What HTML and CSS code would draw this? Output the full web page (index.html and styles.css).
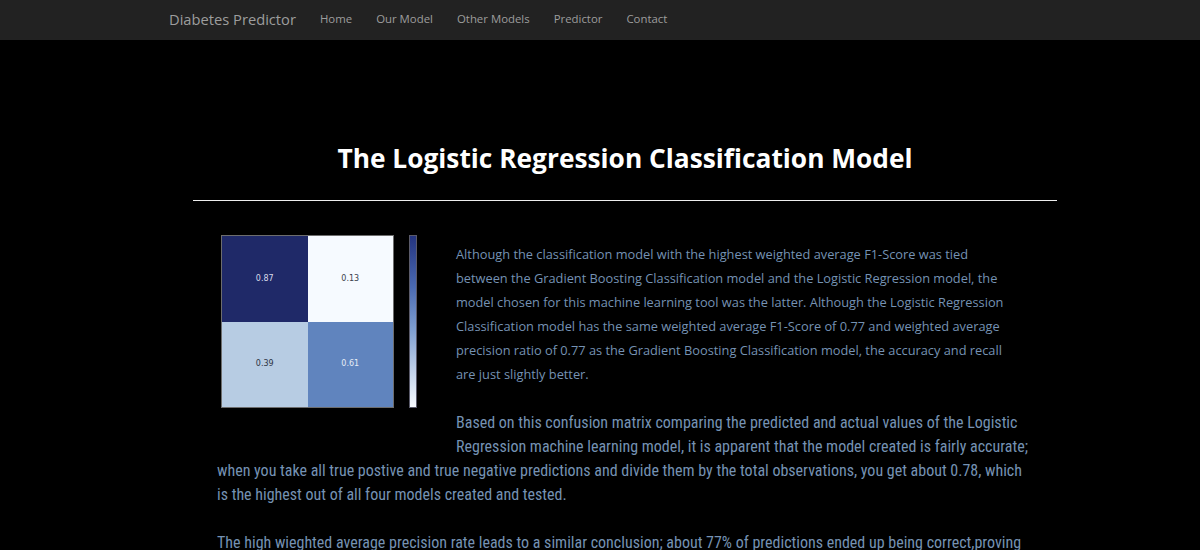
FILE: index.html
```html
<!DOCTYPE html>
<html lang="en">
<head>
<meta charset="utf-8">
<title>Diabetes Predictor</title>
<link rel="stylesheet" href="styles.css">
</head>
<body>
<nav class="navbar">
  <a class="brand" href="#">Diabetes Predictor</a>
  <ul class="nav">
    <li><a href="#">Home</a></li>
    <li><a href="#">Our Model</a></li>
    <li><a href="#">Other Models</a></li>
    <li><a href="#">Predictor</a></li>
    <li><a href="#">Contact</a></li>
  </ul>
</nav>
<main class="page">
  <div class="container">
    <h1 class="title">The Logistic Regression Classification Model</h1>
    <hr class="rule">
    <div class="content">
      <figure class="matrix-fig">
        <div class="matrix">
          <div class="cell c87">0.87</div>
          <div class="cell c13">0.13</div>
          <div class="cell c39">0.39</div>
          <div class="cell c61">0.61</div>
        </div>
        <div class="colorbar"></div>
      </figure>
      <p class="p1">Although the classification model with the highest weighted average F1-Score was tied<br>between the Gradient Boosting Classification model and the Logistic Regression model, the<br>model chosen for this machine learning tool was the latter. Although the Logistic Regression<br>Classification model has the same weighted average F1-Score of 0.77 and weighted average<br>precision ratio of 0.77 as the Gradient Boosting Classification model, the accuracy and recall<br>are just slightly better.</p>
      <p class="p2">Based on this confusion matrix comparing the predicted and actual values of the Logistic Regression machine learning model, it is apparent that the model created is fairly accurate; when you take all true postive and true negative predictions and divide them by the total observations, you get about 0.78, which is the highest out of all four models created and tested.</p>
      <p class="p2">The high wieghted average precision rate leads to a similar conclusion; about 77% of predictions ended up being correct,proving that the model is a reliable tool for predicting whether a patient has diabetes.</p>
    </div>
  </div>
</main>
</body>
</html>
```
FILE: styles.css
```css
html, body {
  margin: 0;
  padding: 0;
  background: #000;
}
body {
  font-family: "Open Sans", "DejaVu Sans", sans-serif;
}
.navbar {
  height: 40px;
  background: #222;
  display: flex;
  align-items: flex-start;
  padding-left: 169px;
  box-sizing: border-box;
}
.brand {
  color: #9d9d9d;
  font-size: 14.7px;
  text-decoration: none;
  margin-right: 12px;
  line-height: 39px;
}
.nav {
  list-style: none;
  display: flex;
  margin: 0;
  padding: 0;
}
.nav a {
  display: block;
  padding: 0 12px;
  line-height: 38px;
  color: #9d9d9d;
  font-size: 11.4px;
  text-decoration: none;
}
.page {
  padding: 99px 0 0 50px;
}
.container {
  width: 864px;
  margin: 0 auto;
}
.title {
  margin: 0;
  text-align: center;
  color: #fff;
  font-size: 26.3px;
  font-weight: 700;
  line-height: 38px;
}
.rule {
  margin: 23px 0 0;
  border: 0;
  border-top: 1px solid #eee;
  height: 0;
}
.content {
  display: flow-root;
  padding: 34px 24px 0;
  color: #7592b3;
  line-height: 24px;
}
.matrix-fig {
  float: left;
  margin: 0 39px 35px 4px;
  display: flex;
  align-items: flex-start;
  gap: 15px;
}
.matrix {
  width: 173px;
  height: 173px;
  display: grid;
  grid-template-columns: 1fr 1fr;
  grid-template-rows: 1fr 1fr;
  border: 1px solid #6d6d6d;
  box-sizing: border-box;
}
.cell {
  display: flex;
  align-items: center;
  justify-content: center;
  font-family: "DejaVu Sans", sans-serif;
  font-size: 8px;
}
.c87 { background: #1f2968; color: #d8dbe8; }
.c13 { background: #f6faff; color: #3a3f4d; }
.c39 { background: #b7cce3; color: #2e3544; }
.c61 { background: #6084be; color: #e6ecf6; }
.colorbar {
  width: 8px;
  height: 173px;
  box-sizing: border-box;
  border: 1px solid #5a5a6a;
  background: linear-gradient(#24347f, #4a6ab2 30%, #7f9fd0 55%, #c3d3ea 80%, #f7fbff);
}
.p1 {
  margin: 7px 0 25px;
  font-size: 12.8px;
  white-space: nowrap;
}
.p2 {
  margin: 0 0 24px;
  font-family: "Liberation Sans Narrow", "Roboto Condensed", "DejaVu Sans", sans-serif;
  font-size: 16px;
}
```
